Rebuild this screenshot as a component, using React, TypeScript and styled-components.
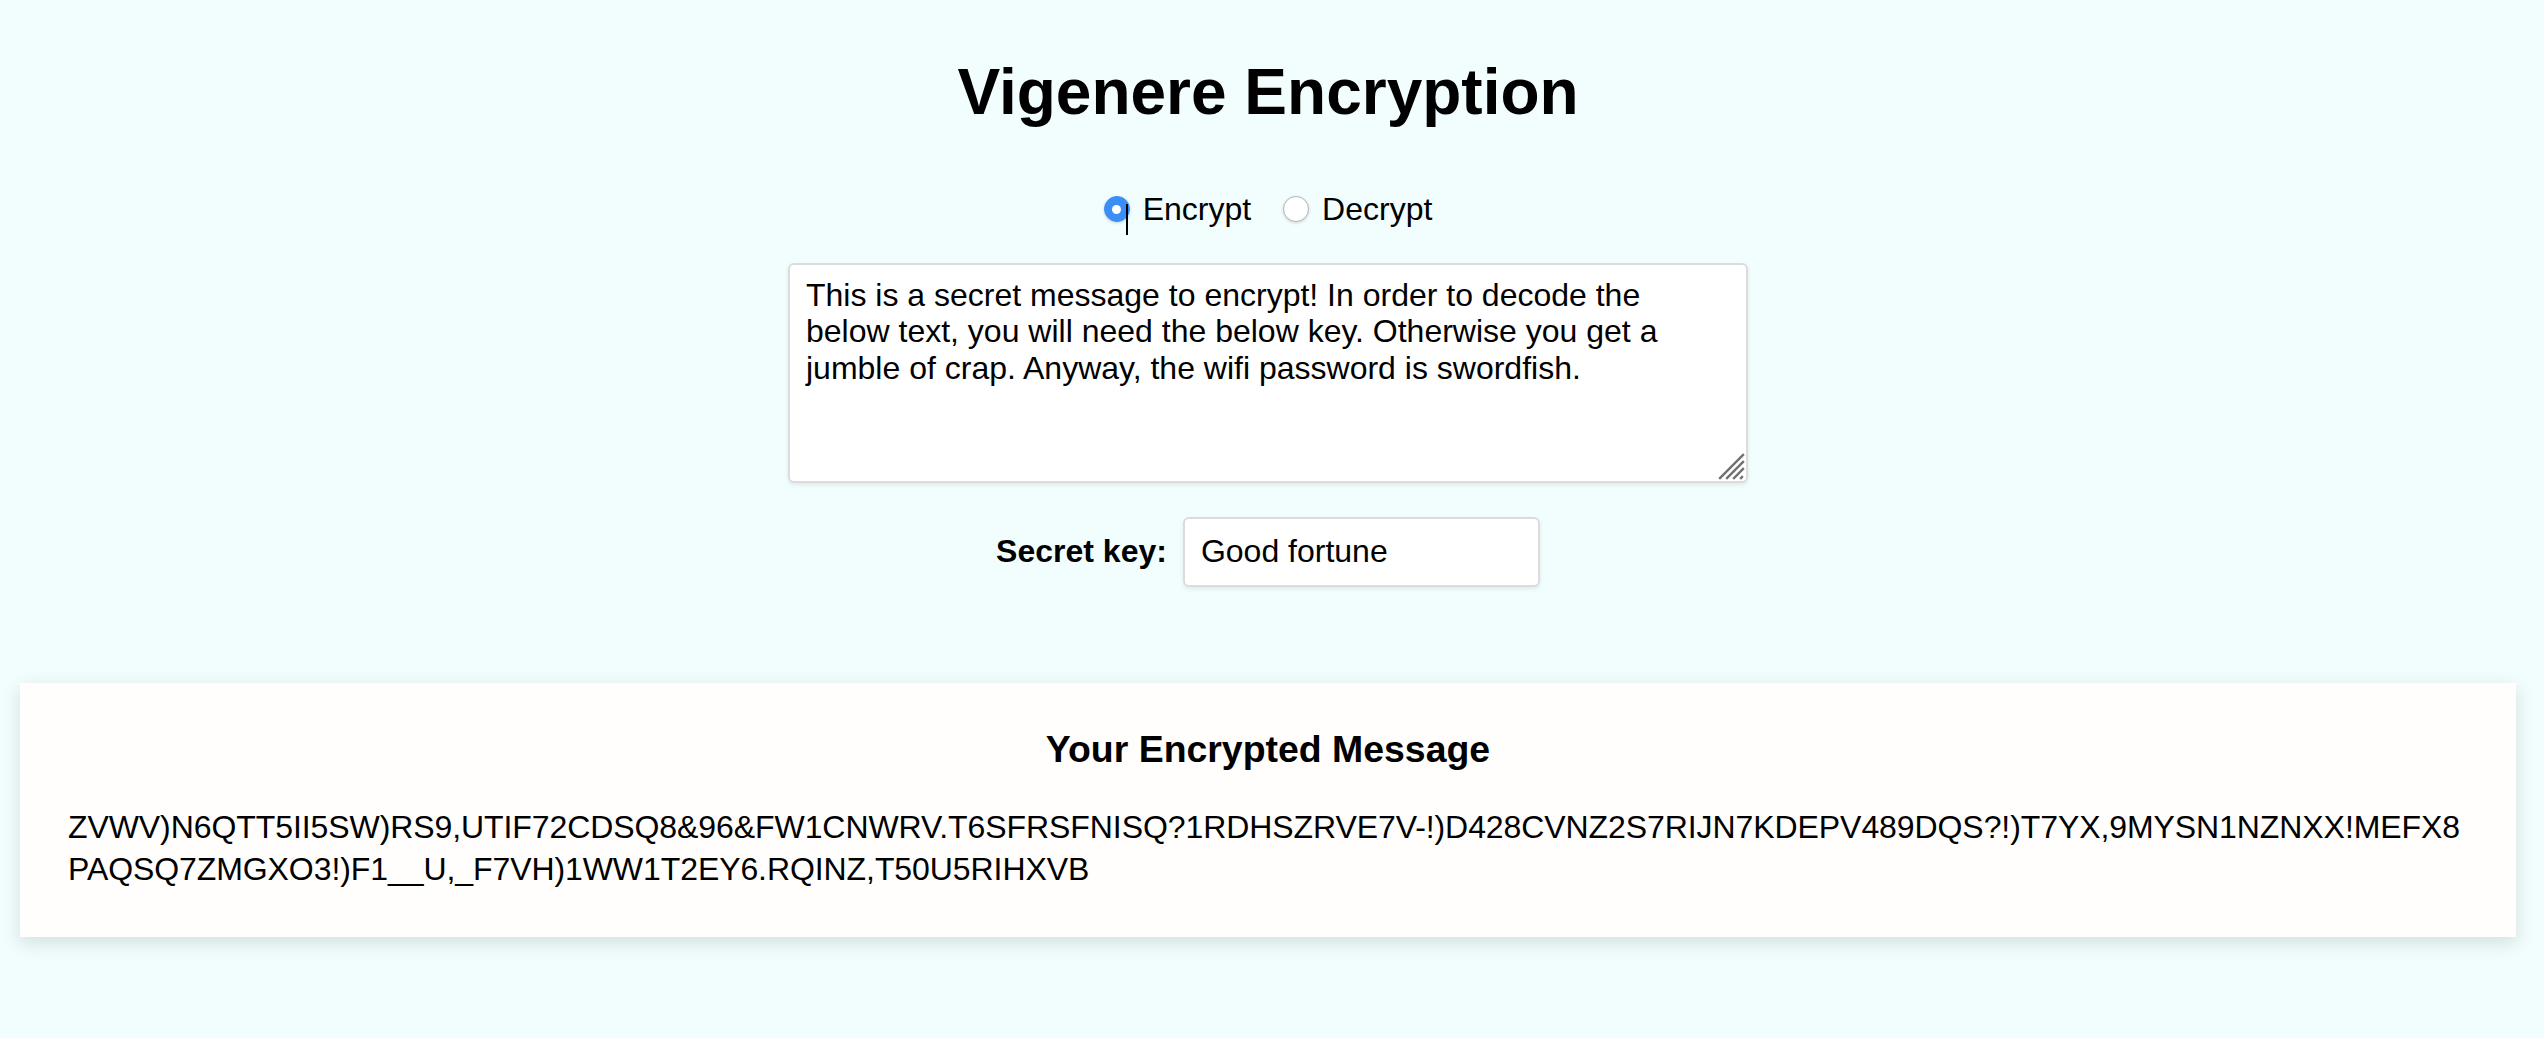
import React, { useState } from "react";
import styled, { createGlobalStyle } from "styled-components";

const GlobalStyle = createGlobalStyle`
  html, body {
    margin: 0;
    padding: 0;
    background: #f2fefd;
  }
  body {
    font-family: "Liberation Sans", Arial, Helvetica, sans-serif;
    color: #000;
  }
`;

const Page = styled.div`
  box-sizing: border-box;
  width: 2544px;
  min-height: 1038px;
  padding: 56px 28px 40px 20px;
  display: flex;
  flex-direction: column;
  align-items: center;
`;

const Title = styled.h1`
  margin: 0;
  font-size: 64px;
  font-weight: 700;
  line-height: 73.5px;
  text-align: center;
`;

const ModeRow = styled.div`
  position: relative;
  margin-top: 61px;
  display: flex;
  align-items: center;
  gap: 32px;
  height: 37px;
`;

const ModeOption = styled.label`
  display: flex;
  align-items: center;
  gap: 13px;
  font-size: 32px;
  line-height: 37px;
  cursor: pointer;
`;

const Radio = styled.input.attrs({ type: "radio" })`
  appearance: none;
  margin: 0;
  width: 26px;
  height: 26px;
  border-radius: 50%;
  box-sizing: border-box;
  background: #fff;
  border: 1.5px solid #b5b5b5;
  box-shadow: 0 1px 3px rgba(0, 0, 0, 0.16);
  display: grid;
  place-items: center;

  &:checked {
    background: #3b8ef6;
    border-color: #3b8ef6;
  }
  &:checked::after {
    content: "";
    width: 9px;
    height: 9px;
    border-radius: 50%;
    background: #fff;
  }
`;

const Caret = styled.span`
  position: absolute;
  left: 22px;
  top: 13px;
  width: 2px;
  height: 31px;
  background: #000;
  pointer-events: none;
`;

const BoxWrap = styled.div`
  position: relative;
  margin-top: 35px;
  display: flex;
`;

const MessageBox = styled.textarea`
  box-sizing: border-box;
  width: 960px;
  height: 220px;
  padding: 12px 16px;
  border: 2px solid #dcdcdc;
  border-radius: 6px;
  background: #fff;
  box-shadow: 0 2px 4px rgba(0, 0, 0, 0.08);
  font-family: "Liberation Sans", Arial, Helvetica, sans-serif;
  font-size: 32px;
  line-height: 36.8px;
  color: #000;
  resize: none;
  outline: none;
`;

const Grip = styled.svg`
  position: absolute;
  right: 3px;
  bottom: 3px;
  width: 28px;
  height: 28px;
  pointer-events: none;
`;

const KeyRow = styled.div`
  margin-top: 34px;
  display: flex;
  align-items: center;
  gap: 16px;
`;

const KeyLabel = styled.label`
  font-size: 32px;
  font-weight: 700;
`;

const KeyInput = styled.input`
  box-sizing: border-box;
  width: 357px;
  height: 70px;
  padding: 0 16px;
  border: 2px solid #dcdcdc;
  border-radius: 6px;
  background: #fff;
  box-shadow: 0 2px 4px rgba(0, 0, 0, 0.08);
  font-family: "Liberation Sans", Arial, Helvetica, sans-serif;
  font-size: 32px;
  color: #000;
  outline: none;
`;

const ResultCard = styled.section`
  margin-top: 96px;
  align-self: stretch;
  box-sizing: border-box;
  padding: 45px 48px 47px;
  background: #fffefc;
  box-shadow: 0 6px 18px rgba(40, 60, 60, 0.16);
`;

const ResultTitle = styled.h3`
  margin: 0;
  font-size: 37.44px;
  font-weight: 700;
  line-height: 43px;
  text-align: center;
`;

const ResultText = styled.p`
  margin: 35px 0 0;
  font-size: 32px;
  line-height: 42px;
  letter-spacing: -0.08px;
  white-space: nowrap;
`;

const plain =
  "This is a secret message to encrypt! In order to decode the below text, you will need the below key. Otherwise you get a jumble of crap. Anyway, the wifi password is swordfish.";

const cipherLines = [
  "ZVWV)N6QTT5II5SW)RS9,UTIF72CDSQ8&96&FW1CNWRV.T6SFRSFNISQ?1RDHSZRVE7V-!)D428CVNZ2S7RIJN7KDEPV489DQS?!)T7YX,9MYSN1NZNXX!MEFX8",
  "PAQSQ7ZMGXO3!)F1__U,_F7VH)1WW1T2EY6.RQINZ,T50U5RIHXVB",
];

export default function App() {
  const [mode, setMode] = useState<"encrypt" | "decrypt">("encrypt");
  const [text, setText] = useState(plain);
  const [key, setKey] = useState("Good fortune");

  return (
    <>
      <GlobalStyle />
      <Page>
        <Title>Vigenere Encryption</Title>
        <ModeRow>
          <ModeOption>
            <Radio
              name="mode"
              checked={mode === "encrypt"}
              onChange={() => setMode("encrypt")}
            />
            Encrypt
          </ModeOption>
          <ModeOption>
            <Radio
              name="mode"
              checked={mode === "decrypt"}
              onChange={() => setMode("decrypt")}
            />
            Decrypt
          </ModeOption>
          <Caret />
        </ModeRow>
        <BoxWrap>
          <MessageBox value={text} onChange={(e) => setText(e.target.value)} />
          <Grip viewBox="0 0 28 28">
            <g stroke="#707070" strokeWidth="2.4" strokeLinecap="square">
              <line x1="3" y1="26" x2="26" y2="3" />
              <line x1="10" y1="26" x2="26" y2="10" />
              <line x1="17" y1="26" x2="26" y2="17" />
              <line x1="24" y1="26" x2="25" y2="25" />
            </g>
          </Grip>
        </BoxWrap>
        <KeyRow>
          <KeyLabel htmlFor="secret-key">Secret key:</KeyLabel>
          <KeyInput
            id="secret-key"
            value={key}
            onChange={(e) => setKey(e.target.value)}
          />
        </KeyRow>
        <ResultCard>
          <ResultTitle>Your Encrypted Message</ResultTitle>
          <ResultText>
            {cipherLines[0]}
            <br />
            {cipherLines[1]}
          </ResultText>
        </ResultCard>
      </Page>
    </>
  );
}
